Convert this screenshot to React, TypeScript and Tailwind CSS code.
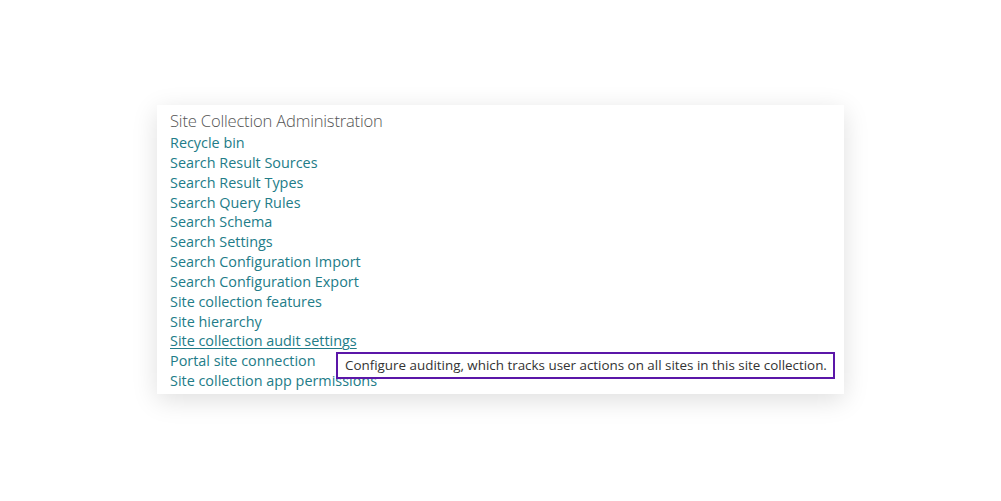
import React from "react";

const links = [
  "Recycle bin",
  "Search Result Sources",
  "Search Result Types",
  "Search Query Rules",
  "Search Schema",
  "Search Settings",
  "Search Configuration Import",
  "Search Configuration Export",
  "Site collection features",
  "Site hierarchy",
  "Site collection audit settings",
  "Portal site connection",
  "Site collection app permissions",
];

export default function App() {
  return (
    <div className="w-[1001px] h-[501px] bg-white pt-[105px] pl-[157px] font-['Open_Sans',sans-serif]">
      <div className="relative w-[687px] h-[289px] bg-white shadow-[0_6px_24px_rgba(0,0,0,0.13)] pl-[13px] pt-[5px]">
        <div className="text-[16.6px] leading-[22px] font-light text-[#555] tracking-[-0.2px]">
          Site Collection Administration
        </div>
        <ul className="flex flex-col mt-[1px]">
          {links.map((l) => (
            <li
              key={l}
              className={
                "text-[14.4px] leading-[19.85px] text-[#227c88] " +
                (l === "Site collection audit settings" ? "underline underline-offset-2" : "")
              }
            >
              {l}
            </li>
          ))}
        </ul>
        <div className="absolute left-[179px] top-[247px] w-[499px] h-[27px] border-2 border-[#5b16a8] bg-white flex items-center pl-[7px] text-[13.4px] text-[#333] whitespace-nowrap">
          Configure auditing, which tracks user actions on all sites in this site collection.
        </div>
      </div>
    </div>
  );
}
